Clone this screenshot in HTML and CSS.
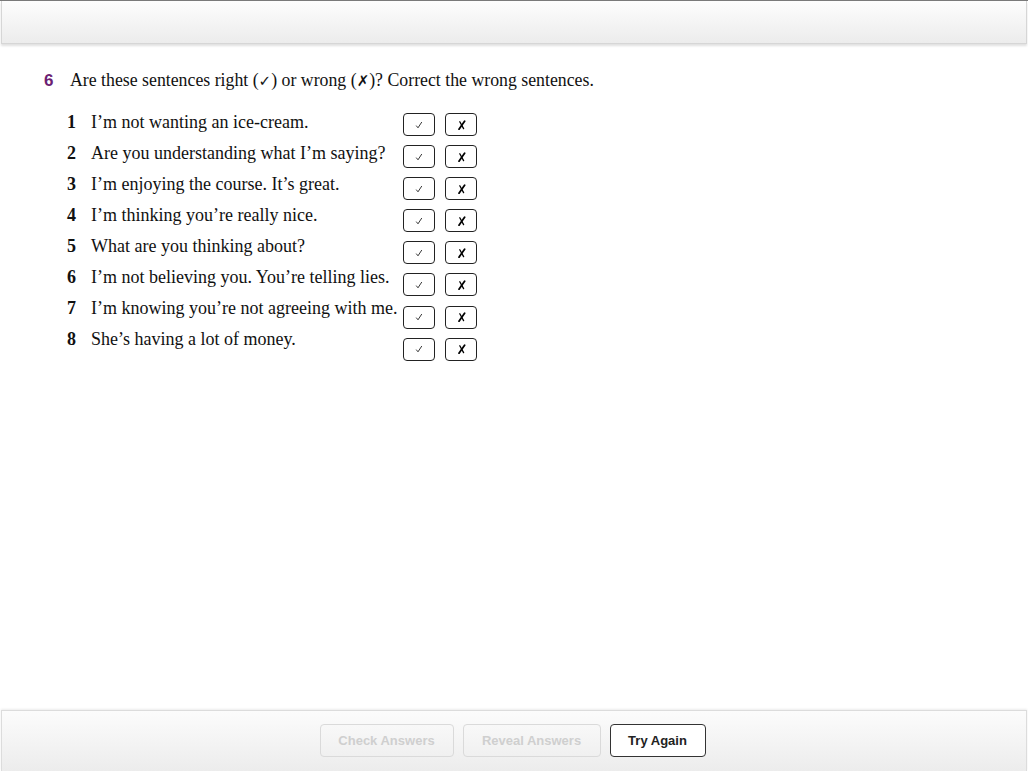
FILE: index.html
```html
<!DOCTYPE html>
<html>
<head>
<meta charset="utf-8">
<link rel="stylesheet" href="styles.css">
</head>
<body>
<div class="topline"></div>
<header class="topbar"></header>
<main class="content">
  <h1 class="task"><span class="tasknum">6</span><span class="tasktext">Are these sentences right (<span class="tick">✓</span>) or wrong (<span class="cross">✗</span>)? Correct the wrong sentences.</span></h1>
  <div class="exercise">
    <ol class="items">
      <li><b>1</b><span>I’m not wanting an ice-cream.</span></li>
      <li><b>2</b><span>Are you understanding what I’m saying?</span></li>
      <li><b>3</b><span>I’m enjoying the course. It’s great.</span></li>
      <li><b>4</b><span>I’m thinking you’re really nice.</span></li>
      <li><b>5</b><span>What are you thinking about?</span></li>
      <li><b>6</b><span>I’m not believing you. You’re telling lies.</span></li>
      <li><b>7</b><span>I’m knowing you’re not agreeing with me.</span></li>
      <li><b>8</b><span>She’s having a lot of money.</span></li>
    </ol>
    <div class="choices">
      <div class="pair"><span class="box"><svg class="ico" width="8" height="8" viewBox="0 0 8 8"><path d="M1.2 4.6 L3 6.8 L6.8 1" fill="none" stroke="#222" stroke-width="0.9"/></svg></span><span class="box"><svg class="ico" width="9" height="10" viewBox="0 0 9 10"><path d="M7.6 1.2 Q5 4.8 2 9.2" fill="none" stroke="#000" stroke-width="1.8" stroke-linecap="round"/><path d="M2.8 1.8 Q4.6 5 6.6 8.6" fill="none" stroke="#000" stroke-width="1.3" stroke-linecap="round"/></svg></span></div>
      <div class="pair"><span class="box"><svg class="ico" width="8" height="8" viewBox="0 0 8 8"><path d="M1.2 4.6 L3 6.8 L6.8 1" fill="none" stroke="#222" stroke-width="0.9"/></svg></span><span class="box"><svg class="ico" width="9" height="10" viewBox="0 0 9 10"><path d="M7.6 1.2 Q5 4.8 2 9.2" fill="none" stroke="#000" stroke-width="1.8" stroke-linecap="round"/><path d="M2.8 1.8 Q4.6 5 6.6 8.6" fill="none" stroke="#000" stroke-width="1.3" stroke-linecap="round"/></svg></span></div>
      <div class="pair"><span class="box"><svg class="ico" width="8" height="8" viewBox="0 0 8 8"><path d="M1.2 4.6 L3 6.8 L6.8 1" fill="none" stroke="#222" stroke-width="0.9"/></svg></span><span class="box"><svg class="ico" width="9" height="10" viewBox="0 0 9 10"><path d="M7.6 1.2 Q5 4.8 2 9.2" fill="none" stroke="#000" stroke-width="1.8" stroke-linecap="round"/><path d="M2.8 1.8 Q4.6 5 6.6 8.6" fill="none" stroke="#000" stroke-width="1.3" stroke-linecap="round"/></svg></span></div>
      <div class="pair"><span class="box"><svg class="ico" width="8" height="8" viewBox="0 0 8 8"><path d="M1.2 4.6 L3 6.8 L6.8 1" fill="none" stroke="#222" stroke-width="0.9"/></svg></span><span class="box"><svg class="ico" width="9" height="10" viewBox="0 0 9 10"><path d="M7.6 1.2 Q5 4.8 2 9.2" fill="none" stroke="#000" stroke-width="1.8" stroke-linecap="round"/><path d="M2.8 1.8 Q4.6 5 6.6 8.6" fill="none" stroke="#000" stroke-width="1.3" stroke-linecap="round"/></svg></span></div>
      <div class="pair"><span class="box"><svg class="ico" width="8" height="8" viewBox="0 0 8 8"><path d="M1.2 4.6 L3 6.8 L6.8 1" fill="none" stroke="#222" stroke-width="0.9"/></svg></span><span class="box"><svg class="ico" width="9" height="10" viewBox="0 0 9 10"><path d="M7.6 1.2 Q5 4.8 2 9.2" fill="none" stroke="#000" stroke-width="1.8" stroke-linecap="round"/><path d="M2.8 1.8 Q4.6 5 6.6 8.6" fill="none" stroke="#000" stroke-width="1.3" stroke-linecap="round"/></svg></span></div>
      <div class="pair"><span class="box"><svg class="ico" width="8" height="8" viewBox="0 0 8 8"><path d="M1.2 4.6 L3 6.8 L6.8 1" fill="none" stroke="#222" stroke-width="0.9"/></svg></span><span class="box"><svg class="ico" width="9" height="10" viewBox="0 0 9 10"><path d="M7.6 1.2 Q5 4.8 2 9.2" fill="none" stroke="#000" stroke-width="1.8" stroke-linecap="round"/><path d="M2.8 1.8 Q4.6 5 6.6 8.6" fill="none" stroke="#000" stroke-width="1.3" stroke-linecap="round"/></svg></span></div>
      <div class="pair"><span class="box"><svg class="ico" width="8" height="8" viewBox="0 0 8 8"><path d="M1.2 4.6 L3 6.8 L6.8 1" fill="none" stroke="#222" stroke-width="0.9"/></svg></span><span class="box"><svg class="ico" width="9" height="10" viewBox="0 0 9 10"><path d="M7.6 1.2 Q5 4.8 2 9.2" fill="none" stroke="#000" stroke-width="1.8" stroke-linecap="round"/><path d="M2.8 1.8 Q4.6 5 6.6 8.6" fill="none" stroke="#000" stroke-width="1.3" stroke-linecap="round"/></svg></span></div>
      <div class="pair"><span class="box"><svg class="ico" width="8" height="8" viewBox="0 0 8 8"><path d="M1.2 4.6 L3 6.8 L6.8 1" fill="none" stroke="#222" stroke-width="0.9"/></svg></span><span class="box"><svg class="ico" width="9" height="10" viewBox="0 0 9 10"><path d="M7.6 1.2 Q5 4.8 2 9.2" fill="none" stroke="#000" stroke-width="1.8" stroke-linecap="round"/><path d="M2.8 1.8 Q4.6 5 6.6 8.6" fill="none" stroke="#000" stroke-width="1.3" stroke-linecap="round"/></svg></span></div>
    </div>
  </div>
</main>
<footer class="bottombar">
  <button class="btn disabled check">Check Answers</button>
  <button class="btn disabled reveal">Reveal Answers</button>
  <button class="btn active again">Try Again</button>
</footer>
</body>
</html>
```
FILE: styles.css
```css
html, body {
  margin: 0;
  padding: 0;
  background: #fff;
  width: 1028px;
  height: 771px;
  overflow: hidden;
}
body {
  display: flex;
  flex-direction: column;
  font-family: "Liberation Serif", "Times New Roman", serif;
  color: #111;
}
.topline {
  height: 1px;
  background: #7a7a7a;
  flex: none;
}
.topbar {
  flex: none;
  height: 42px;
  margin: 0 1px;
  border: 1px solid #d6d6d6;
  border-top: none;
  background: linear-gradient(#fdfdfd, #ececec);
  box-shadow: 0 2px 2px rgba(0,0,0,0.12);
}
.content {
  flex: 1;
  padding: 26px 0 0 44px;
}
.task {
  margin: 0;
  font-weight: normal;
  font-size: 17.8px;
  line-height: 20px;
  display: flex;
  align-items: baseline;
}
.tasknum {
  font-family: "Liberation Sans", Arial, sans-serif;
  font-weight: bold;
  color: #6c1f73;
  font-size: 17px;
  width: 26px;
}
.tasktext {
  font-size: 17.8px;
}
.tick {
  font-family: "DejaVu Sans", sans-serif;
  font-size: 15px;
}
.cross {
  font-family: "DejaVu Sans", sans-serif;
  font-weight: bold;
  font-size: 15px;
}
.exercise {
  display: flex;
  margin-top: 16px;
  margin-left: 23px;
}
.items {
  list-style: none;
  margin: 0;
  padding: 0;
  width: 336px;
  font-size: 18px;
}
.items li {
  height: 31px;
  line-height: 31px;
  display: flex;
  white-space: nowrap;
}
.items b {
  width: 24px;
  flex: none;
}
.choices {
  padding-top: 6px;
  display: flex;
  flex-direction: column;
  gap: 9.1px;
}
.pair {
  display: flex;
  gap: 10px;
}
.box {
  box-sizing: border-box;
  width: 32px;
  height: 23px;
  border: 1px solid #222;
  border-radius: 4px;
  display: flex;
  align-items: center;
  justify-content: center;
  background: #fff;
}
.ico {
  display: block;
}
.bottombar {
  flex: none;
  height: 58px;
  margin: 0 1px;
  border: 1px solid #dcdcdc;
  border-bottom: none;
  background: linear-gradient(#fcfcfc, #ececec);
  box-shadow: 0 -1px 2px rgba(0,0,0,0.08);
  display: flex;
  justify-content: center;
  align-items: center;
  gap: 9px;
  padding-right: 3px;
  padding-bottom: 2px;
}
.btn {
  font-family: "Liberation Sans", Arial, sans-serif;
  font-weight: bold;
  font-size: 13px;
  height: 33px;
  border-radius: 4px;
  background: #fff;
  padding: 0;
}
.btn.disabled {
  color: #cfcfcf;
  border: 1px solid #dadada;
  background: transparent;
}
.btn.active {
  color: #222;
  border: 1px solid #333;
}
.check { width: 134px; }
.reveal { width: 138px; }
.again { width: 96px; }
```
